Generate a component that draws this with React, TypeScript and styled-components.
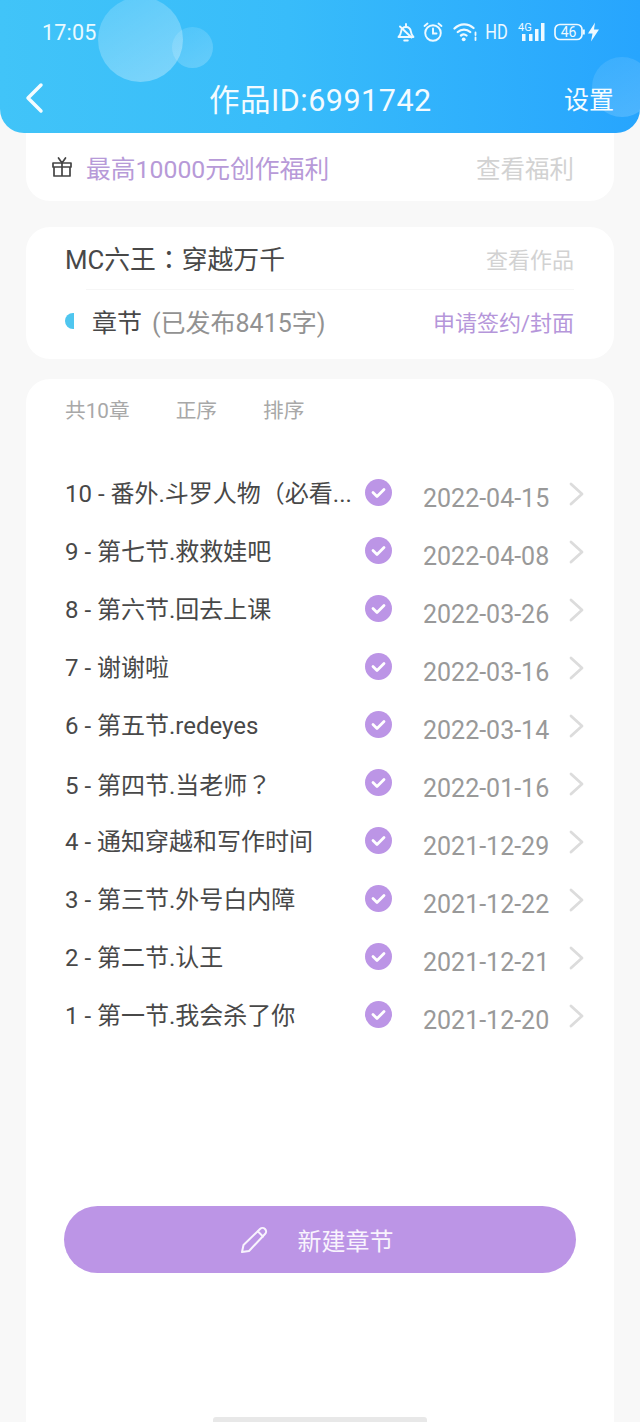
import React from "react";
import styled, { createGlobalStyle } from "styled-components";

const Global = createGlobalStyle`
  html, body { margin: 0; padding: 0; background: #f8f8f8; }
  body { font-family: Roboto, "Noto Sans CJK SC", sans-serif; }
  * { box-sizing: border-box; }
`;

const Page = styled.div`
  width: 640px;
  height: 1422px;
  position: relative;
  overflow: hidden;
  background: #f8f8f8;
  display: flex;
  flex-direction: column;
`;

const Header = styled.header`
  position: relative;
  z-index: 2;
  height: 133px;
  flex: none;
  overflow: hidden;
  background: linear-gradient(90deg, #41c4f8 0%, #38bcfa 45%, #27a5fe 100%);
  border-radius: 0 0 24px 24px;
  color: #fff;
  padding: 18px 26px 0 24px;
`;

const Bubble = styled.div<{ $size: number; $x: number; $y: number; $o: number }>`
  position: absolute;
  width: ${(p) => p.$size}px;
  height: ${(p) => p.$size}px;
  left: ${(p) => p.$x}px;
  top: ${(p) => p.$y}px;
  border-radius: 50%;
  background: linear-gradient(150deg, rgba(255, 255, 255, ${(p) => p.$o * 0.45}) 0%, rgba(255, 255, 255, ${(p) => p.$o}) 100%);
`;

const StatusBar = styled.div`
  position: relative;
  display: flex;
  align-items: center;
  justify-content: space-between;
  height: 28px;
  padding-left: 18px;
  padding-right: 14px;
`;

const Time = styled.span`
  font-size: 21.5px;
  letter-spacing: 0.2px;
  color: #eafaff;
`;

const StatusIcons = styled.div`
  display: flex;
  align-items: center;
  color: #eef9ff;
`;

const HD = styled.span`
  font-size: 20px;
  margin: 0 10px 0 7px;
  transform: scaleX(0.82);
  width: 23px;
  display: flex;
  justify-content: center;
`;

const NavBar = styled.div`
  position: relative;
  display: flex;
  align-items: center;
  justify-content: space-between;
  margin-top: 30px;
  height: 44px;
`;

const NavTitle = styled.h1`
  position: absolute;
  left: 185px;
  top: 5px;
  margin: 0;
  font-size: 30.5px;
  line-height: 40px;
  font-weight: 400;
  letter-spacing: 0.5px;
  color: #f3fbff;
  white-space: nowrap;
`;

const NavAction = styled.span`
  font-size: 25px;
  line-height: 44px;
  margin-top: 6px;
  color: #f6fcff;
`;

const Card = styled.section`
  margin: 0 26px;
  background: #fff;
  border-radius: 24px;
`;

const Bonus = styled(Card)`
  height: 68px;
  margin-top: 0;
  border-radius: 0 0 24px 24px;
  display: flex;
  align-items: center;
  padding: 0 40px 0 25px;
`;

const BonusText = styled.span`
  font-size: 24.8px;
  color: #b79ad8;
  margin-left: 13px;
  flex: 1;
  white-space: nowrap;
`;

const MutedLink = styled.span<{ $size: number }>`
  font-size: ${(p) => p.$size}px;
  color: #d2d2d2;
  white-space: nowrap;
`;

const WorkCard = styled(Card)`
  height: 132px;
  margin-top: 26px;
  padding: 0 40px;
`;

const WorkRow = styled.div`
  height: 63px;
  display: flex;
  align-items: center;
  justify-content: space-between;
  border-bottom: 1px solid #f6f6f6;
  margin-left: 20px;
`;

const WorkName = styled.span`
  font-size: 25.8px;
  color: #484848;
  margin: -2px 0 0 -21px;
  white-space: nowrap;
`;

const FullColon = styled.span`
  font-family: "Noto Sans CJK TC", sans-serif;
`;

const ChapterRow = styled.div`
  height: 62px;
  display: flex;
  align-items: center;
`;

const HalfDot = styled.span`
  width: 9px;
  height: 16px;
  background: #4fc6ef;
  border-radius: 9px 0 0 9px;
  margin-left: -1px;
  margin-right: 19px;
`;

const ChapterLabel = styled.span`
  font-size: 25px;
  color: #484848;
  margin-left: -1px;
  white-space: nowrap;
`;

const ChapterCount = styled.span`
  font-size: 25px;
  color: #929292;
  margin-left: 10px;
  flex: 1;
  white-space: nowrap;
`;

const SignLink = styled.span`
  font-size: 22px;
  color: #b596da;
  white-space: nowrap;
`;

const ListCard = styled(Card)`
  flex: 1;
  margin-top: 20px;
  border-radius: 24px 24px 0 0;
  padding: 18px 30px 0 39px;
  display: flex;
  flex-direction: column;
`;

const Sort = styled.div`
  display: flex;
  gap: 46px;
  height: 28px;
  font-size: 20.7px;
  line-height: 28px;
  color: #a8a8a8;
`;

const Rows = styled.div`
  margin-top: 51px;
  display: flex;
  flex-direction: column;
`;

const Row = styled.div`
  display: grid;
  grid-template-columns: 286px 14px 26px 32px 127px 18px 16px;
  height: 58px;
  align-items: start;
`;

const RowTitle = styled.span`
  font-size: 24px;
  line-height: 34px;
  color: #484848;
  white-space: nowrap;
  margin-top: 1px;
`;

const QuestionMark = styled.span`
  font-family: "Noto Sans CJK TC", sans-serif;
`;

const Check = styled.svg`
  grid-column: 3;
  margin-top: 3px;
  display: block;
`;

const RowDate = styled.span`
  grid-column: 5;
  font-size: 25px;
  line-height: 34px;
  color: #999;
  white-space: nowrap;
  margin-top: 6px;
`;

const Chevron = styled.svg`
  grid-column: 7;
  margin-top: 6px;
  display: block;
`;

const CreateButton = styled.button`
  margin: 150px 0 0 -1px;
  width: 512px;
  height: 67px;
  flex: none;
  border: 0;
  border-radius: 34px;
  background: #bc95e6;
  color: #f8f3fd;
  display: flex;
  align-items: center;
  justify-content: center;
  gap: 28px;
  padding: 0 7px 0 0;
  font-family: inherit;
  font-size: 24px;
`;

const HomeBar = styled.div`
  position: absolute;
  left: 213px;
  bottom: 0;
  width: 214px;
  height: 5px;
  border-radius: 3px 3px 0 0;
  background: #e8e8e8;
`;

const rows: [React.ReactNode, string][] = [
  ["10 - 番外.斗罗人物（必看...", "2022-04-15"],
  ["9 - 第七节.救救娃吧", "2022-04-08"],
  ["8 - 第六节.回去上课", "2022-03-26"],
  ["7 - 谢谢啦", "2022-03-16"],
  ["6 - 第五节.redeyes", "2022-03-14"],
  [<>5 - 第四节.当老师<QuestionMark>？</QuestionMark></>, "2022-01-16"],
  ["4 - 通知穿越和写作时间", "2021-12-29"],
  ["3 - 第三节.外号白内障", "2021-12-22"],
  ["2 - 第二节.认王", "2021-12-21"],
  ["1 - 第一节.我会杀了你", "2021-12-20"],
];

export default function App() {
  return (
    <Page>
      <Global />
      <Header>
        <Bubble $size={85} $x={98} $y={-3} $o={0.34} />
        <Bubble $size={41} $x={172} $y={27} $o={0.22} />
        <Bubble $size={60} $x={592} $y={57} $o={0.18} />
        <StatusBar>
          <Time>17:05</Time>
          <StatusIcons>
            <svg width="18" height="20" viewBox="0 0 18 20" fill="none" stroke="currentColor" strokeWidth="1.9" strokeLinejoin="round" strokeLinecap="round">
              <path d="M1.500 15c1.800-1.500 2.300-3 2.600-5.300C4.500 6.800 6.300 5 9 5s4.500 1.800 4.900 4.700c.3 2.300.8 3.800 2.600 5.300z" />
              <path d="M9 2v3M7.200 18.500h3.600M3 4.500l11.500 11" />
            </svg>
            <svg style={{ marginLeft: 8 }} width="20" height="20" viewBox="0 0 20 20" fill="none" stroke="currentColor" strokeWidth="1.9" strokeLinecap="round">
              <circle cx="10" cy="11" r="7.800" />
              <path d="M10 6.500V11.500H13.500M1.500 4L4.500 1.500M18.500 4L15.500 1.500" />
            </svg>
            <svg style={{ marginLeft: 10 }} width="25" height="20" viewBox="0 0 25 20" fill="none" stroke="currentColor" strokeWidth="2.300" strokeLinecap="round">
              <path d="M1.500 6.500C7 1 15 1 20.500 6M4.800 10c3.600-3.300 8.800-3.300 12.400 0M8 13.500c1.800-1.500 3.800-1.500 5.500 0" />
              <circle cx="10.700" cy="17.300" r="1.900" fill="currentColor" stroke="none" />
              <path d="M22.500 10.500v2.500M22.500 15.500v2.500" strokeWidth="1.800" />
            </svg>
            <HD>HD</HD>
            <svg width="27" height="21" viewBox="0 0 27 21" fill="currentColor">
              <text x="0" y="9" fontSize="11" fontFamily="Roboto, sans-serif">4G</text>
              <rect x="4" y="12" width="3.500" height="7" />
              <rect x="11" y="12" width="3.500" height="7" />
              <rect x="17" y="7" width="3.500" height="12" />
              <rect x="23" y="1" width="3.500" height="18" />
            </svg>
            <svg style={{ marginLeft: 9 }} width="46" height="20" viewBox="0 0 46 20" fill="none">
              <rect x="1" y="2.500" width="27" height="15" rx="5" stroke="currentColor" strokeWidth="1.700" />
              <rect x="29" y="7.500" width="1.800" height="5" fill="currentColor" />
              <text x="14.500" y="15" textAnchor="middle" fontSize="14" fontFamily="Roboto, sans-serif" fill="currentColor">46</text>
              <path d="M41 0.500l-7 11h4.500l-1.500 8 8-12h-5z" fill="currentColor" />
            </svg>
          </StatusIcons>
        </StatusBar>
        <NavBar>
          <svg width="20" height="32" viewBox="0 0 20 32" fill="none" stroke="#f4fcff" strokeWidth="3.500" strokeLinecap="round" strokeLinejoin="round">
            <path d="M17 3L4 16l13 13" />
          </svg>
          <NavTitle>作品ID:6991742</NavTitle>
          <NavAction>设置</NavAction>
        </NavBar>
      </Header>

      <Bonus>
        <svg width="22" height="22" viewBox="0 0 22 22" fill="none" stroke="#444" strokeWidth="1.700" strokeLinejoin="round" strokeLinecap="round">
          <path d="M2 7h18v4H2zM3 11h16v9H3zM11 7v13" />
          <path d="M11 7L7.500 2M11 7l3.500-5" />
        </svg>
        <BonusText>最高10000元创作福利</BonusText>
        <MutedLink $size={24.5}>查看福利</MutedLink>
      </Bonus>

      <WorkCard>
        <WorkRow>
          <WorkName>MC六王<FullColon>：</FullColon>穿越万千</WorkName>
          <MutedLink $size={22}>查看作品</MutedLink>
        </WorkRow>
        <ChapterRow>
          <HalfDot />
          <ChapterLabel>章节</ChapterLabel>
          <ChapterCount>(已发布8415字)</ChapterCount>
          <SignLink>申请签约/封面</SignLink>
        </ChapterRow>
      </WorkCard>

      <ListCard>
        <Sort>
          <span>共10章</span>
          <span>正序</span>
          <span>排序</span>
        </Sort>
        <Rows>
          {rows.map(([title, date]) => (
            <Row key={date}>
              <RowTitle>{title}</RowTitle>
              <Check width="27" height="27" viewBox="0 0 27 27">
                <circle cx="13.500" cy="13.500" r="13.500" fill="#bc95e6" />
                <path d="M8 13.500l4 4 7-7" fill="none" stroke="#fff" strokeWidth="2.800" strokeLinecap="round" strokeLinejoin="round" />
              </Check>
              <RowDate>{date}</RowDate>
              <Chevron width="16" height="24" viewBox="0 0 16 24" fill="none" stroke="#dcdcdc" strokeWidth="2.800" strokeLinecap="round" strokeLinejoin="round">
                <path d="M3 2l11 10L3 22" />
              </Chevron>
            </Row>
          ))}
        </Rows>
        <CreateButton>
          <svg width="30" height="28" viewBox="0 0 30 28" fill="none" stroke="#f8f3fd" strokeWidth="2" strokeLinejoin="round" strokeLinecap="round">
            <path d="M2 26l1.500-7L20 3c1.500-1.500 3.500-1.500 5 0s1.500 3.500 0 5L9 25z" />
            <path d="M18 5.500l5 5" />
          </svg>
          新建章节
        </CreateButton>
      </ListCard>
      <HomeBar />
    </Page>
  );
}
